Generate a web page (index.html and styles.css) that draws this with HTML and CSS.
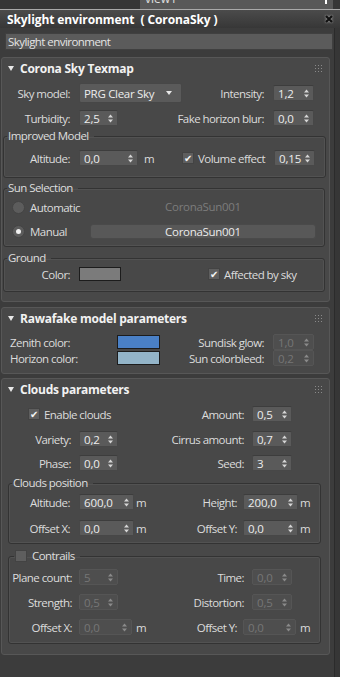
FILE: index.html
```html
<!DOCTYPE html>
<html lang="en">

<head>
    <meta charset="UTF-8">
    <title>Skylight environment (CoronaSky)</title>
    <link rel="stylesheet" href="styles.css">
</head>

<body>

    <!-- viewport selector, mostly cut off -->
    <div class="topstrip">
        <div class="viewdrop"><span>view1</span><i class="vd-arrow"></i></div>
    </div>

    <div class="titlebar">
        <span>Skylight environment&nbsp; ( CoronaSky )</span>
        <svg class="close" viewBox="0 0 8 8"><path d="M1 1 L7 7 M7 1 L1 7" /></svg>
    </div>

    <div class="main">
        <div class="content">
            <div class="namebox">Skylight environment</div>

            <!-- Corona Sky Texmap -->
            <div class="rollout r1">
                <div class="rhead">
                    <svg class="tri" viewBox="0 0 6 5"><polygon points="0,0 6,0 3,5" /></svg>
                    <span>Corona Sky Texmap</span>
                    <svg class="grip" viewBox="0 0 7 7"><rect x="0" y="0" width="1" height="1"/><rect x="3" y="0" width="1" height="1"/><rect x="6" y="0" width="1" height="1"/><rect x="0" y="3" width="1" height="1"/><rect x="3" y="3" width="1" height="1"/><rect x="6" y="3" width="1" height="1"/><rect x="0" y="6" width="1" height="1"/><rect x="3" y="6" width="1" height="1"/><rect x="6" y="6" width="1" height="1"/></svg>
                </div>

                <div class="row row-sky">
                    <span class="lbl w68">Sky model:</span>
                    <div class="dropdown">PRG Clear Sky
                        <svg viewBox="0 0 6 4"><polygon points="0,0 6,0 3,4" /></svg>
                    </div>
                    <span class="lbl grow">Intensity:</span>
                    <div class="spin w41">1,2<svg viewBox="0 0 5 9"><polygon points="0,3.5 2.5,0.5 5,3.5"/><polygon points="0,5.5 2.5,8.5 5,5.5"/></svg></div>
                    <span class="tail t15"></span>
                </div>

                <div class="row row-turb">
                    <span class="lbl w68">Turbidity:</span>
                    <div class="spin w39">2,5<svg viewBox="0 0 5 9"><polygon points="0,3.5 2.5,0.5 5,3.5"/><polygon points="0,5.5 2.5,8.5 5,5.5"/></svg></div>
                    <span class="lbl grow">Fake horizon blur:</span>
                    <div class="spin w41">0,0<svg viewBox="0 0 5 9"><polygon points="0,3.5 2.5,0.5 5,3.5"/><polygon points="0,5.5 2.5,8.5 5,5.5"/></svg></div>
                    <span class="tail t15"></span>
                </div>

                <fieldset class="group g-improved">
                    <legend>Improved Model</legend>
                    <div class="row">
                        <span class="lbl w66">Altitude:</span>
                        <div class="spin w59">0,0<svg viewBox="0 0 5 9"><polygon points="0,3.5 2.5,0.5 5,3.5"/><polygon points="0,5.5 2.5,8.5 5,5.5"/></svg></div>
                        <span class="unit u-alt">m</span>
                        <span class="check on">&#10004;</span>
                        <span class="chk-text">Volume effect</span>
                        <span class="lbl grow"></span>
                        <div class="spin w41">0,15<svg viewBox="0 0 5 9"><polygon points="0,3.5 2.5,0.5 5,3.5"/><polygon points="0,5.5 2.5,8.5 5,5.5"/></svg></div>
                        <span class="tail t10"></span>
                    </div>
                </fieldset>

                <fieldset class="group g-sun">
                    <legend>Sun Selection</legend>
                    <div class="row row-auto">
                        <span class="radio"></span>
                        <span class="radio-text">Automatic</span>
                        <div class="sunbox off">CoronaSun001</div>
                    </div>
                    <div class="row row-manual">
                        <span class="radio sel"></span>
                        <span class="radio-text">Manual</span>
                        <div class="sunbox btn">CoronaSun001</div>
                    </div>
                </fieldset>

                <fieldset class="group g-ground">
                    <legend>Ground</legend>
                    <div class="row">
                        <span class="lbl w66">Color:</span>
                        <span class="swatch sw-ground"></span>
                        <span class="check on ck-sky">&#10004;</span>
                        <span class="chk-text">Affected by sky</span>
                    </div>
                </fieldset>
            </div>

            <!-- Rawafake model parameters -->
            <div class="rollout r2">
                <div class="rhead">
                    <svg class="tri" viewBox="0 0 6 5"><polygon points="0,0 6,0 3,5" /></svg>
                    <span>Rawafake model parameters</span>
                    <svg class="grip" viewBox="0 0 7 7"><rect x="0" y="0" width="1" height="1"/><rect x="3" y="0" width="1" height="1"/><rect x="6" y="0" width="1" height="1"/><rect x="0" y="3" width="1" height="1"/><rect x="3" y="3" width="1" height="1"/><rect x="6" y="3" width="1" height="1"/><rect x="0" y="6" width="1" height="1"/><rect x="3" y="6" width="1" height="1"/><rect x="6" y="6" width="1" height="1"/></svg>
                </div>

                <div class="row row-zenith">
                    <span class="lbl left w115">Zenith color:</span>
                    <span class="swatch sw-zenith"></span>
                    <span class="lbl grow">Sundisk glow:</span>
                    <div class="spin off w41">1,0<svg viewBox="0 0 5 9"><polygon points="0,3.5 2.5,0.5 5,3.5"/><polygon points="0,5.5 2.5,8.5 5,5.5"/></svg></div>
                    <span class="tail t15"></span>
                </div>
                <div class="row">
                    <span class="lbl left w115">Horizon color:</span>
                    <span class="swatch sw-horizon"></span>
                    <span class="lbl grow">Sun colorbleed:</span>
                    <div class="spin off w41">0,2<svg viewBox="0 0 5 9"><polygon points="0,3.5 2.5,0.5 5,3.5"/><polygon points="0,5.5 2.5,8.5 5,5.5"/></svg></div>
                    <span class="tail t15"></span>
                </div>
            </div>

            <!-- Clouds parameters -->
            <div class="rollout r3">
                <div class="rhead">
                    <svg class="tri" viewBox="0 0 6 5"><polygon points="0,0 6,0 3,5" /></svg>
                    <span>Clouds parameters</span>
                    <svg class="grip" viewBox="0 0 7 7"><rect x="0" y="0" width="1" height="1"/><rect x="3" y="0" width="1" height="1"/><rect x="6" y="0" width="1" height="1"/><rect x="0" y="3" width="1" height="1"/><rect x="3" y="3" width="1" height="1"/><rect x="6" y="3" width="1" height="1"/><rect x="0" y="6" width="1" height="1"/><rect x="3" y="6" width="1" height="1"/><rect x="6" y="6" width="1" height="1"/></svg>
                </div>

                <div class="row row-enable">
                    <span class="check on">&#10004;</span>
                    <span class="chk-text">Enable clouds</span>
                    <span class="lbl grow">Amount:</span>
                    <div class="spin w40 gap8">0,5<svg viewBox="0 0 5 9"><polygon points="0,3.5 2.5,0.5 5,3.5"/><polygon points="0,5.5 2.5,8.5 5,5.5"/></svg></div>
                    <span class="tail t37"></span>
                </div>
                <div class="row row-variety">
                    <span class="lbl w69">Variety:</span>
                    <div class="spin w39 gap8">0,2<svg viewBox="0 0 5 9"><polygon points="0,3.5 2.5,0.5 5,3.5"/><polygon points="0,5.5 2.5,8.5 5,5.5"/></svg></div>
                    <span class="lbl grow">Cirrus amount:</span>
                    <div class="spin w40 gap8">0,7<svg viewBox="0 0 5 9"><polygon points="0,3.5 2.5,0.5 5,3.5"/><polygon points="0,5.5 2.5,8.5 5,5.5"/></svg></div>
                    <span class="tail t37"></span>
                </div>
                <div class="row row-phase">
                    <span class="lbl w69">Phase:</span>
                    <div class="spin w39 gap8">0,0<svg viewBox="0 0 5 9"><polygon points="0,3.5 2.5,0.5 5,3.5"/><polygon points="0,5.5 2.5,8.5 5,5.5"/></svg></div>
                    <span class="lbl grow">Seed:</span>
                    <div class="spin w40 gap8">3<svg viewBox="0 0 5 9"><polygon points="0,3.5 2.5,0.5 5,3.5"/><polygon points="0,5.5 2.5,8.5 5,5.5"/></svg></div>
                    <span class="tail t37"></span>
                </div>

                <fieldset class="group g-pos">
                    <legend>Clouds position</legend>
                    <div class="row row-pos1">
                        <span class="lbl w61">Altitude:</span>
                        <div class="spin w55">600,0<svg viewBox="0 0 5 9"><polygon points="0,3.5 2.5,0.5 5,3.5"/><polygon points="0,5.5 2.5,8.5 5,5.5"/></svg></div>
                        <span class="unit">m</span>
                        <span class="lbl grow">Height:</span>
                        <div class="spin w55 gap6">200,0<svg viewBox="0 0 5 9"><polygon points="0,3.5 2.5,0.5 5,3.5"/><polygon points="0,5.5 2.5,8.5 5,5.5"/></svg></div>
                        <span class="unit">m</span>
                        <span class="tail t11"></span>
                    </div>
                    <div class="row row-pos2">
                        <span class="lbl w61">Offset X:</span>
                        <div class="spin w55">0,0<svg viewBox="0 0 5 9"><polygon points="0,3.5 2.5,0.5 5,3.5"/><polygon points="0,5.5 2.5,8.5 5,5.5"/></svg></div>
                        <span class="unit">m</span>
                        <span class="lbl grow">Offset Y:</span>
                        <div class="spin w55 gap6">0,0<svg viewBox="0 0 5 9"><polygon points="0,3.5 2.5,0.5 5,3.5"/><polygon points="0,5.5 2.5,8.5 5,5.5"/></svg></div>
                        <span class="unit">m</span>
                        <span class="tail t11"></span>
                    </div>
                </fieldset>

                <fieldset class="group g-contrails">
                    <legend><span class="check"></span>Contrails</legend>
                    <div class="row row-c1">
                        <span class="lbl w63">Plane count:</span>
                        <div class="spin off w39 gap7">5<svg viewBox="0 0 5 9"><polygon points="0,3.5 2.5,0.5 5,3.5"/><polygon points="0,5.5 2.5,8.5 5,5.5"/></svg></div>
                        <span class="lbl grow">Time:</span>
                        <div class="spin off w40 gap8">0,0<svg viewBox="0 0 5 9"><polygon points="0,3.5 2.5,0.5 5,3.5"/><polygon points="0,5.5 2.5,8.5 5,5.5"/></svg></div>
                        <span class="tail t28"></span>
                    </div>
                    <div class="row row-c2">
                        <span class="lbl w63">Strength:</span>
                        <div class="spin off w39 gap7">0,5<svg viewBox="0 0 5 9"><polygon points="0,3.5 2.5,0.5 5,3.5"/><polygon points="0,5.5 2.5,8.5 5,5.5"/></svg></div>
                        <span class="lbl grow">Distortion:</span>
                        <div class="spin off w40 gap8">0,5<svg viewBox="0 0 5 9"><polygon points="0,3.5 2.5,0.5 5,3.5"/><polygon points="0,5.5 2.5,8.5 5,5.5"/></svg></div>
                        <span class="tail t28"></span>
                    </div>
                    <div class="row row-c2">
                        <span class="lbl w63">Offset X:</span>
                        <div class="spin off w53 gap7">0,0<svg viewBox="0 0 5 9"><polygon points="0,3.5 2.5,0.5 5,3.5"/><polygon points="0,5.5 2.5,8.5 5,5.5"/></svg></div>
                        <span class="unit u4">m</span>
                        <span class="lbl grow">Offset Y:</span>
                        <div class="spin off w53 gap6">0,0<svg viewBox="0 0 5 9"><polygon points="0,3.5 2.5,0.5 5,3.5"/><polygon points="0,5.5 2.5,8.5 5,5.5"/></svg></div>
                        <span class="unit u4">m</span>
                        <span class="tail t11"></span>
                    </div>
                </fieldset>
            </div>
        </div>

        <div class="scroll"></div>
    </div>

</body>

</html>
```

FILE: styles.css
```css
* {
    margin: 0;
    padding: 0;
    box-sizing: border-box;
}

body {
    width: 340px;
    height: 677px;
    overflow: hidden;
    background: #3c3c3c;
    font-family: 'Open Sans', 'Noto Sans', sans-serif;
    font-size: 11.5px;
    letter-spacing: -0.55px;
    color: #dcdcdc;
}

/* top strip + title */
.topstrip {
    height: 10px;
    background: #363636;
    border-bottom: 1px solid #a9a9a9;
}

.viewdrop {
    margin-left: 140px;
    width: 193px;
    height: 9px;
    background: #585858;
    overflow: hidden;
    display: flex;
    justify-content: space-between;
    padding: 0 6px 0 5px;
}

.viewdrop span {
    margin-top: -9px;
    line-height: 16px;
    font-size: 12px;
    letter-spacing: 0;
    color: #e0e0e0;
}

.vd-arrow {
    width: 2px;
    height: 4px;
    background: #fff;
}

.titlebar {
    height: 18px;
    background: linear-gradient(#4b4b4b, #373737);
    display: flex;
    align-items: center;
    justify-content: space-between;
    padding: 0 7px 0 7px;
    font-weight: bold;
    font-size: 12px;
    letter-spacing: -0.1px;
    color: #fff;
}

.close {
    width: 8px;
    height: 8px;
    stroke: #111;
    stroke-width: 2.2;
    filter: drop-shadow(0 0 1px #bbb);
}

.main {
    display: flex;
    height: 649px;
}

.content {
    width: 334px;
}

.scroll {
    flex: 1;
    background: #363636;
    border-left: 1px solid #2b2b2b;
}

.namebox {
    margin: 5px 0 0 5px;
    width: 328px;
    height: 17px;
    background: #5b5b5b;
    border: 1px solid #404040;
    padding-left: 2px;
    line-height: 15px;
    color: #e4e4e4;
}

/* rollouts */
.rollout {
    margin-left: 1px;
    width: 329px;
    border: 1px solid #575757;
    border-radius: 3px;
    background: #484848;
}

.r1 {
    margin-top: 7px;
    padding-bottom: 9px;
}

.r2 {
    margin-top: 5px;
    padding-bottom: 7px;
}

.r3 {
    margin-top: 4px;
    padding-bottom: 10px;
}

.rhead {
    height: 20px;
    display: flex;
    align-items: center;
    padding: 0 7px 0 6px;
    font-weight: bold;
    font-size: 12px;
    letter-spacing: -0.25px;
    color: #f2f2f2;
}

.rhead span {
    flex: 1;
    margin-left: 6px;
}

.tri {
    width: 6px;
    height: 5px;
    fill: #e8e8e8;
}

.grip {
    width: 7px;
    height: 7px;
    fill: #8a8a8a;
}

/* rows */
.row {
    display: flex;
    align-items: center;
    height: 16px;
}

.row-sky {
    height: 20px;
    margin-top: 5px;
}

.row-turb {
    margin-top: 7px;
}

.row-auto {
    margin-top: 4px;
}

.row-manual {
    margin-top: 8px;
}

.row-zenith {
    margin-top: 6px;
}

.row-enable {
    margin-top: 7px;
    padding-left: 26px;
}

.row-variety {
    margin-top: 9px;
}

.row-phase {
    margin-top: 8px;
}

.row-pos1 {
    margin-top: 4px;
}

.row-pos2 {
    margin-top: 10px;
}

.row-c1 {
    margin-top: 6px;
}

.row-c2 {
    margin-top: 9px;
}

.lbl {
    flex-shrink: 0;
    text-align: right;
    white-space: nowrap;
    margin-right: 9px;
}

.lbl.left {
    text-align: left;
    padding-left: 8px;
    margin-right: 0;
}

.lbl.grow {
    flex: 1;
    margin-right: 9px;
}

.w61 { width: 61px; }
.w63 { width: 63px; margin-right: 7px; }
.w66 { width: 66px; }
.w68 { width: 68px; }
.w69 { width: 69px; margin-right: 8px; }
.w115 { width: 115px; }

.tail { flex-shrink: 0; }
.t10 { width: 10px; }
.t11 { width: 11px; }
.t15 { width: 15px; }
.t28 { width: 28px; }
.t37 { width: 37px; }

/* spinners */
.spin {
    flex-shrink: 0;
    height: 16px;
    display: flex;
    align-items: center;
    justify-content: space-between;
    padding: 0 4px 0 4px;
    background: #5a5a5a;
    border: 1px solid #474747;
    border-top-color: #3d3d3d;
    border-radius: 2px;
    color: #ededed;
    letter-spacing: -0.1px;
}

.spin svg {
    width: 5px;
    height: 9px;
    fill: #d6d6d6;
}

.spin.off {
    background: #4e4e4e;
    border-color: #555;
    color: #767676;
}

.spin.off svg {
    fill: #8a8a8a;
}

.w39 { width: 39px; }
.w40 { width: 40px; }
.w41 { width: 41px; }
.w53 { width: 53px; }
.w55 { width: 55px; }
.w59 { width: 59px; }

.grow + .gap8 { margin-left: -1px; }
.grow + .gap6 { margin-left: -3px; }
.grow + .gap7 { margin-left: -2px; }

.unit {
    flex-shrink: 0;
    width: 9px;
    margin-left: 2px;
    letter-spacing: 0;
}

.u-alt {
    margin-left: 6px;
    width: 10px;
}

.u4 {
    margin-left: 4px;
    width: 9px;
}

.dropdown {
    flex-shrink: 0;
    width: 103px;
    height: 20px;
    display: flex;
    align-items: center;
    justify-content: space-between;
    padding: 0 9px 0 4px;
    background: #5a5a5a;
    border: 1px solid #474747;
    border-radius: 2px;
    letter-spacing: -0.3px;
    color: #ededed;
}

.dropdown svg {
    width: 6px;
    height: 4px;
    fill: #e8e8e8;
}

/* checkboxes and radios */
.check {
    flex-shrink: 0;
    width: 12px;
    height: 12px;
    background: #5e5e5e;
    border: 1px solid #434343;
    color: #f4f4f4;
    font-size: 10px;
    letter-spacing: 0;
    line-height: 10px;
    text-align: center;
}

.g-improved .check {
    margin-left: 28px;
}

.ck-sky {
    margin-left: 87px;
}

.chk-text {
    margin-left: 4px;
    white-space: nowrap;
}

.radio {
    flex-shrink: 0;
    width: 13px;
    height: 13px;
    margin-left: 8px;
    border-radius: 50%;
    background: #5c5c5c;
    border: 1px solid #444;
    display: flex;
    align-items: center;
    justify-content: center;
}

.radio.sel::after {
    content: '';
    width: 5px;
    height: 5px;
    border-radius: 50%;
    background: #f0f0f0;
}

.radio-text {
    width: 60px;
    margin-left: 5px;
}

.sunbox {
    width: 226px;
    height: 15px;
    line-height: 13px;
    text-align: center;
    letter-spacing: -0.3px;
}

.sunbox.off {
    color: #7c7c7c;
}

.sunbox.btn {
    background: #585858;
    border: 1px solid #4a4a4a;
    border-radius: 3px;
    color: #ececec;
}

/* colour swatches */
.swatch {
    flex-shrink: 0;
    height: 14px;
    border: 1px solid #1c1c1c;
}

.sw-ground {
    width: 42px;
    background: #7b7b7b;
}

.sw-zenith {
    width: 43px;
    background: #4a80c6;
}

.sw-horizon {
    width: 43px;
    background: #93b4c8;
}

/* group boxes */
.group {
    border: 1px solid #333;
    border-radius: 3px;
    box-shadow: inset 0 0 0 1px #525252;
    padding: 0;
}

.group legend {
    margin-left: 3px;
    padding: 0 5px 0 1px;
    height: 14px;
    line-height: 14px;
    color: #dedede;
}

.g-improved {
    margin: 3px 4px 0 1px;
    padding-bottom: 11px;
}

.g-improved .row {
    margin-top: 7px;
}

.g-sun {
    margin: 3px 4px 0 1px;
    padding-bottom: 7px;
}

.g-ground {
    margin: 4px 4px 0 1px;
    padding-bottom: 9px;
}

.g-ground .row {
    margin-top: 1px;
}

.g-pos {
    margin: 5px 8px 0 6px;
    padding-bottom: 7px;
}

.g-contrails {
    margin: 5px 8px 0 6px;
    padding-bottom: 8px;
}

.g-contrails legend {
    display: flex;
    align-items: center;
    margin-left: 5px;
}

.g-contrails legend .check {
    margin-right: 5px;
}
```
